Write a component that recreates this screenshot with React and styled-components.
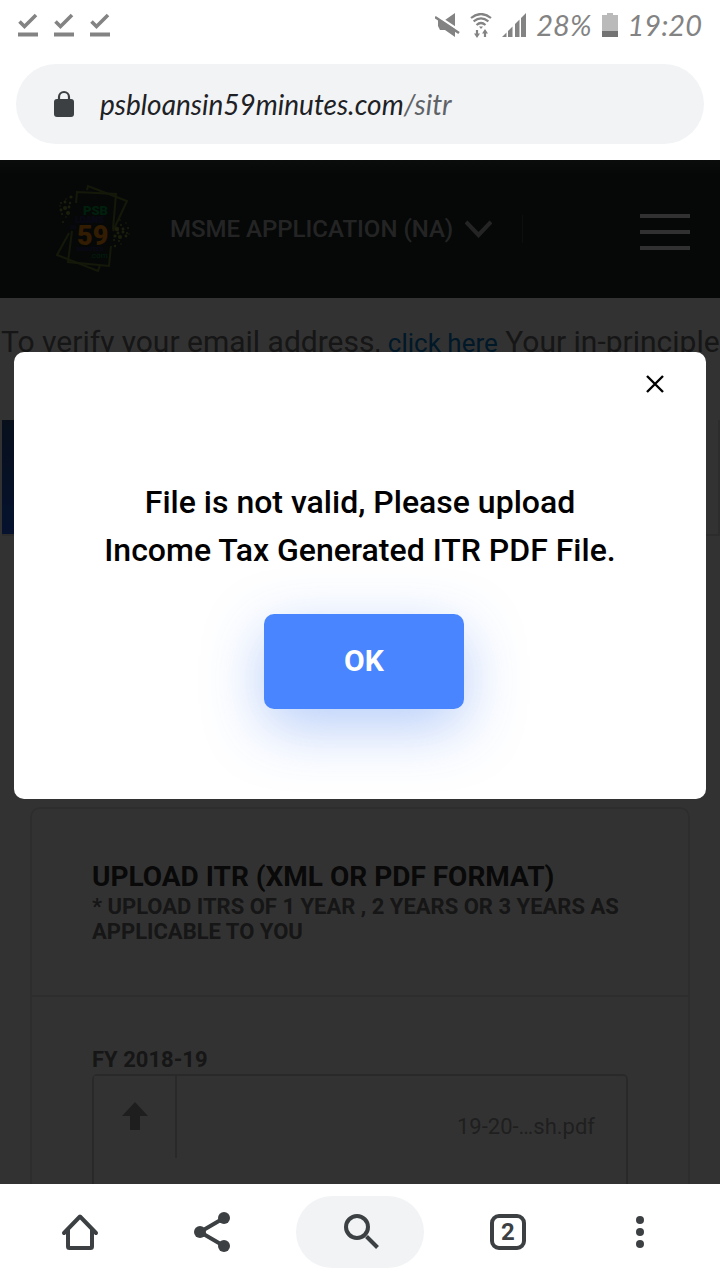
import React from "react";
import styled, { createGlobalStyle } from "styled-components";

const GlobalStyle = createGlobalStyle`
  *, *::before, *::after { box-sizing: border-box; }
  body { margin: 0; font-family: Roboto, "Liberation Sans", sans-serif; }
  button { font: inherit; border: 0; background: none; padding: 0; cursor: pointer; }
  h1, h2, p { margin: 0; }
`;

const Screen = styled.div`
  display: flex;
  flex-direction: column;
  height: 100vh;
  overflow: hidden;
  background: #fff;
`;

const StatusBar = styled.div`
  display: flex;
  align-items: center;
  justify-content: space-between;
  height: 50px;
  padding: 0 18px;
  color: #838383;
  flex: none;
`;

const StatusGroup = styled.div`
  display: flex;
  align-items: center;
  gap: ${(p) => p.$gap}px;
  svg { display: block; }
`;

const StatusText = styled.span`
  font: italic 29px/32px Lato, sans-serif;
`;

const AddressBar = styled.div`
  padding: 14px 16px 16px;
  flex: none;
`;

const AddressPill = styled.div`
  display: flex;
  align-items: center;
  gap: 26px;
  height: 80px;
  padding: 0 38px;
  border-radius: 40px;
  background: #f1f3f5;
  svg { flex: none; }
`;

const AddressText = styled.div`
  font: italic 28px/36px Lato, sans-serif;
  color: #202124;
  white-space: nowrap;
  span { color: #5f6368; }
`;

const Viewport = styled.main`
  position: relative;
  flex: 1;
  min-height: 0;
  overflow: hidden;
  background: #fafafa;
`;

const SiteHeader = styled.header`
  display: flex;
  align-items: center;
  height: 138px;
  padding: 0 30px 0 54px;
  background: linear-gradient(#373d3d, #1e2828 16px);
`;

const Logo = styled.svg`
  width: 80px;
  height: 92px;
  flex: none;
`;

const AppMenu = styled.button`
  display: flex;
  align-items: center;
  gap: 12px;
  margin-left: 36px;
  padding-right: 30px;
  border-right: 1px solid #414646;
  font-size: 24px;
  line-height: 28px;
  font-weight: 500;
  color: #b4b6b6;
`;

const MenuButton = styled.button`
  display: flex;
  flex-direction: column;
  gap: 12px;
  width: 50px;
  padding-top: 6px;
  margin-left: auto;
`;

const MenuLine = styled.span`
  height: 4px;
  background: #f4f4f4;
`;

const Notice = styled.p`
  padding: 26px 1px 0;
  font-size: 30px;
  line-height: 36px;
  color: #6e6e6e;
  white-space: nowrap;
  overflow: hidden;
`;

const NoticeLink = styled.a`
  font-size: 26px;
  color: #0078c8;
  text-decoration: none;
`;

const Steps = styled.div`
  display: flex;
  height: 116px;
  margin: 59px 0 0 2px;
  border: solid #dcdcdc;
  border-width: 0 2px 2px 0;
`;

const ActiveStep = styled.div`
  width: 25%;
  background: linear-gradient(#28508c, #1e5ae6);
`;

const Card = styled.section`
  margin: 271px 30px 0;
  border: 2px solid #e1e1e1;
  border-radius: 10px;
`;

const CardHeader = styled.div`
  padding: 51px 60px 50px;
  border-bottom: 2px solid #e1e1e1;
  min-height: 188px;
`;

const CardTitle = styled.h1`
  font-size: 28px;
  line-height: 34px;
  font-weight: 700;
  color: #2d2d2d;
`;

const CardNote = styled.p`
  font-size: 22px;
  line-height: 25px;
  font-weight: 700;
  color: #6e6e6e;
`;

const CardBody = styled.div`
  padding: 50px 60px 60px;
`;

const FieldLabel = styled.h2`
  font-size: 22px;
  line-height: 25px;
  font-weight: 700;
  color: #6e6e6e;
`;

const FileField = styled.div`
  display: flex;
  justify-content: space-between;
  align-items: flex-start;
  height: 170px;
  margin-top: 2px;
  border: 2px solid #cdcdcd;
  border-radius: 5px;
`;

const UploadButton = styled.button`
  display: flex;
  align-items: center;
  justify-content: center;
  width: 83px;
  height: 82px;
  border-right: 2px solid #cdcdcd;
  && {
    padding-bottom: 2px;
    background: #f8f8f8;
  }
`;

const FileName = styled.span`
  padding: 37px 31px 0;
  font-size: 22px;
  line-height: 28px;
  color: #9b9b9b;
`;

const Overlay = styled.div`
  position: absolute;
  inset: 0;
  padding: 192px 14px 0;
  background: rgba(0, 0, 0, 0.8);
`;

const Dialog = styled.div`
  display: flex;
  flex-direction: column;
  align-items: center;
  padding: 16px 32px 90px;
  border-radius: 10px;
  background: #fff;
`;

const CloseButton = styled.button`
  align-self: flex-end;
  display: flex;
  align-items: center;
  justify-content: center;
  width: 38px;
  height: 32px;
`;

const DialogText = styled.p`
  max-width: 540px;
  margin-top: 78px;
  font-size: 32px;
  line-height: 48px;
  font-weight: 500;
  text-align: center;
  color: #000;
`;

const OkButton = styled.button`
  width: 200px;
  height: 95px;
  margin: 40px 0 0 8px;
  border-radius: 10px;
  color: #fff;
  && {
    padding-bottom: 2px;
    background: #4885ff;
    box-shadow: 0 18px 60px rgba(60, 120, 238, 0.38);
    font-size: 30px;
    font-weight: 700;
  }
`;

const BottomNav = styled.nav`
  display: flex;
  align-items: center;
  justify-content: space-between;
  height: 96px;
  padding: 0 32px;
  background: #fff;
  flex: none;
`;

const NavButton = styled.button`
  display: flex;
  align-items: center;
  justify-content: center;
  width: ${(p) => p.$width}px;
  height: 72px;
  border-radius: 36px;
  && { background: ${(p) => (p.$active ? "#f1f3f5" : "transparent")}; }
`;

const TabCount = styled.span`
  display: flex;
  align-items: center;
  justify-content: center;
  width: 36px;
  height: 36px;
  border: 4px solid #3c4043;
  border-radius: 9px;
  color: #3c4043;
  font-size: 24px;
  line-height: 28px;
  font-weight: 700;
`;

const DownloadDone = () => (
  <svg width="20" height="24" viewBox="0 0 20 24" fill="none" stroke="#838383">
    <path d="M1.500 8.500 6.500 13.500 18 2" strokeWidth="3.600" />
    <path d="M0 21.500H20" strokeWidth="4" />
  </svg>
);

const MutedIcon = () => (
  <svg width="25" height="24" viewBox="0 0 25 24" fill="#838383">
    <path d="M3 7H10L20 0V24L10 17H5L3 13Z" />
    <path d="M1 2 25 18" stroke="#fff" strokeWidth="2.400" />
    <path d="M0 4 24 20" stroke="#838383" strokeWidth="2.600" />
  </svg>
);

const WifiIcon = () => (
  <svg width="22" height="25" viewBox="0 0 22 25" fill="none" stroke="#838383" strokeWidth="2.200">
    <path d="M1 5Q11-3 21 5M3.600 8.400Q11 2.400 18.400 8.400M6.500 12Q11 8 15.500 12" />
    <path d="M9 13.500H13L11 16Z" fill="#838383" stroke="none" />
    <path d="M7 17V22M15 24V19" />
    <path d="M4 20.500H10L7 25ZM12 20.500H18L15 16Z" fill="#838383" stroke="none" />
  </svg>
);

const SignalIcon = () => (
  <svg width="24" height="24" viewBox="0 0 24 24" fill="#838383">
    <path d="M0 24 4.500 19.500V24ZM6 24V18L10.500 13.500V24ZM13 24V11L17.500 6.500V24ZM19 24V5L24 0V24Z" />
  </svg>
);

const BatteryIcon = () => (
  <svg width="16" height="24" viewBox="0 0 16 24">
    <path d="M0 2H5V0H11V2H16V18H0Z" fill="#bababa" />
    <path d="M0 18H16V24H0Z" fill="#737373" />
  </svg>
);

const LockIcon = () => (
  <svg width="20" height="28" viewBox="0 0 20 28">
    <rect y="9" width="20" height="18" rx="3" fill="#3c4043" />
    <path d="M5 10V7A5 5 0 0 1 15 7V10" fill="none" stroke="#3c4043" strokeWidth="2.200" />
  </svg>
);

const dots = [
  [17, 14, 1.6], [12, 16, 0.8], [7, 20, 1], [11, 19, 1.4], [16, 20, 1.2], [6, 23, 0.8],
  [11, 25, 2], [15, 24, 1.4], [7, 27, 1.4], [14, 30, 2], [8, 31, 1], [12, 34, 0.8], [9, 39, 1],
  [66, 37, 0.8], [72, 40, 0.8], [67, 42, 1], [63, 46, 2.2], [69, 46, 1.4], [74, 45, 1],
  [64, 50, 1.4], [69, 49, 1.4], [73, 50, 1], [61, 53, 1.6], [66, 54, 2], [72, 53, 1.4],
  [60, 57, 1], [65, 58, 1], [61, 63, 1.2], [67, 61, 0.8], [75, 51, 0.7],
];

const PsbLogo = () => (
  <Logo viewBox="0 0 80 92" role="img" aria-label="PSB Loans in 59 Minutes">
    <g fill="none" stroke="#64782d" strokeWidth="2">
      <path d="M33 7 34 3 73 18 59 48M15 50 3 72 44 88 46 82" />
      <path d="M22 20 23 9 62 11 59 46M57 63 55 83 14 79 18 48" />
    </g>
    {dots.map(([cx, cy, r]) => (
      <circle key={`${cx}-${cy}`} cx={cx} cy={cy} r={r} fill="#8c963c" />
    ))}
    <g fontFamily="Roboto, sans-serif" fontWeight="900">
      <text x="29" y="32" fontSize="13" fill="#009b3c">PSB</text>
      <text x="21" y="40" fontSize="9" fill="#2d2d6e">LOANS</text>
      <text x="17" y="46" fontSize="5" fill="#2d2d6e">IN</text>
      <text x="23" y="62" fontSize="27" fill="#fa8c0a">59</text>
      <text x="23" y="68" fontSize="6" fill="#2d2d6e">MINUTES</text>
      <text x="36" y="75" fontSize="8" fontWeight="400" fill="#009b3c">.com</text>
    </g>
  </Logo>
);

const HomeIcon = () => (
  <svg width="40" height="40" viewBox="0 0 40 40" fill="none" stroke="#3c4043" strokeWidth="4" strokeLinecap="round" strokeLinejoin="round">
    <path d="M4 21 20 4.500 36 21" />
    <path d="M8 18V34.500Q8 36 9.500 36H30.500Q32 36 32 34.500V18" />
  </svg>
);

const ShareIcon = () => (
  <svg width="40" height="40" viewBox="0 0 40 40" fill="#3c4043">
    <path d="M32 6 8 20 32 34" fill="none" stroke="#3c4043" strokeWidth="4" />
    <circle cx="32" cy="6" r="6" />
    <circle cx="8" cy="20" r="6" />
    <circle cx="32" cy="34" r="6" />
  </svg>
);

const SearchIcon = () => (
  <svg width="40" height="40" viewBox="0 0 40 40" fill="none" stroke="#3c4043" strokeWidth="4">
    <circle cx="17" cy="15" r="11" />
    <path d="M26.500 24.500 37.500 35.500" />
  </svg>
);

const MoreIcon = () => (
  <svg width="8" height="32" viewBox="0 0 8 32" fill="#3c4043">
    <circle cx="4" cy="4" r="4" />
    <circle cx="4" cy="16" r="4" />
    <circle cx="4" cy="28" r="4" />
  </svg>
);

export default function App() {
  return (
    <>
      <GlobalStyle />
      <Screen>
        <StatusBar>
          <StatusGroup $gap={16}>
            <DownloadDone />
            <DownloadDone />
            <DownloadDone />
          </StatusGroup>
          <StatusGroup $gap={10}>
            <MutedIcon />
            <WifiIcon />
            <SignalIcon />
            <StatusText>28%</StatusText>
            <BatteryIcon />
            <StatusText>19:20</StatusText>
          </StatusGroup>
        </StatusBar>

        <AddressBar>
          <AddressPill>
            <LockIcon />
            <AddressText>psbloansin59minutes.com<span>/sitr</span></AddressText>
          </AddressPill>
        </AddressBar>

        <Viewport>
          <SiteHeader>
            <PsbLogo />
            <AppMenu>
              MSME APPLICATION (NA)
              <svg width="27" height="18" viewBox="0 0 27 18" fill="none" stroke="#b4b6b6" strokeWidth="4">
                <path d="M1 2 13.500 15 26 2" />
              </svg>
            </AppMenu>
            <MenuButton aria-label="Menu">
              <MenuLine />
              <MenuLine />
              <MenuLine />
            </MenuButton>
          </SiteHeader>
          <Notice>
            To verify your email address, <NoticeLink href="#verify">click here</NoticeLink> Your in-principle
          </Notice>
          <Steps>
            <ActiveStep />
          </Steps>
          <Card>
            <CardHeader>
              <CardTitle>UPLOAD ITR (XML OR PDF FORMAT)</CardTitle>
              <CardNote>* UPLOAD ITRS OF 1 YEAR , 2 YEARS OR 3 YEARS AS APPLICABLE TO YOU</CardNote>
            </CardHeader>
            <CardBody>
              <FieldLabel>FY 2018-19</FieldLabel>
              <FileField>
                <UploadButton aria-label="Upload file">
                  <svg width="26" height="28" viewBox="0 0 26 28" fill="#969696">
                    <path d="M13 0 26 14H18V28H8V14H0Z" />
                  </svg>
                </UploadButton>
                <FileName>19-20-…sh.pdf</FileName>
              </FileField>
            </CardBody>
          </Card>

          <Overlay>
            <Dialog role="dialog" aria-modal="true" aria-labelledby="dialog-text">
              <CloseButton aria-label="Close">
                <svg width="18" height="18" viewBox="0 0 18 18" fill="none" stroke="#000" strokeWidth="2.400">
                  <path d="M1 1 17 17M17 1 1 17" />
                </svg>
              </CloseButton>
              <DialogText id="dialog-text">
                File is not valid, Please upload Income Tax Generated ITR PDF File.
              </DialogText>
              <OkButton>OK</OkButton>
            </Dialog>
          </Overlay>
        </Viewport>

        <BottomNav>
          <NavButton $width={96} aria-label="Home"><HomeIcon /></NavButton>
          <NavButton $width={88} aria-label="Share"><ShareIcon /></NavButton>
          <NavButton $width={128} $active aria-label="Search"><SearchIcon /></NavButton>
          <NavButton $width={88} aria-label="Tabs"><TabCount>2</TabCount></NavButton>
          <NavButton $width={96} aria-label="More"><MoreIcon /></NavButton>
        </BottomNav>
      </Screen>
    </>
  );
}
